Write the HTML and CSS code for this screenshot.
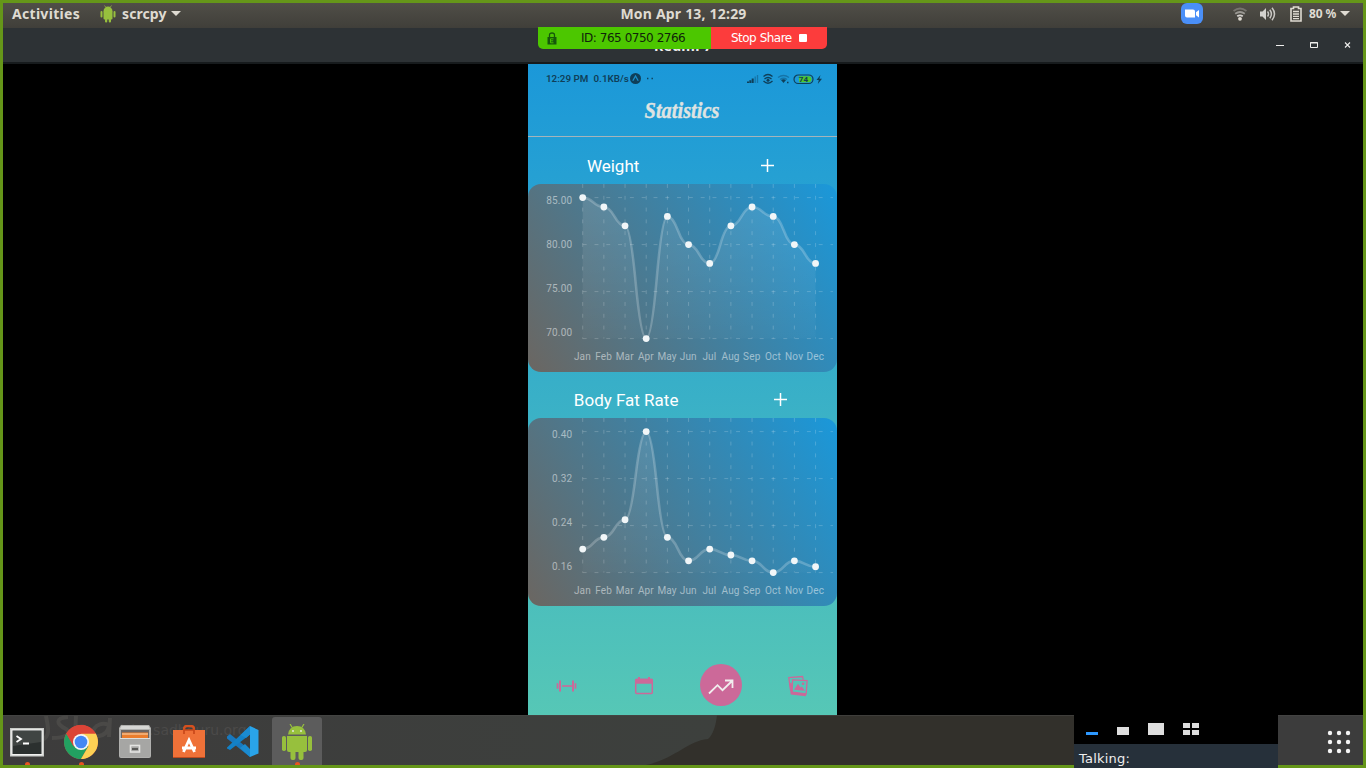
FILE: index.html
```html
<!DOCTYPE html>
<html lang="en">
<head>
<meta charset="utf-8">
<title>Statistics</title>
<link rel="stylesheet" href="styles.css">
</head>
<body>
<div class="screen">
  <header class="topbar">
    <div class="top-left">
      <span class="activities">Activities</span>
      <svg class="droid-small" width="16" height="18" viewBox="0 0 32 36"><g fill="#97c03d"><path d="M7 12h18v15a2 2 0 0 1-2 2H9a2 2 0 0 1-2-2z"/><path d="M7 12.500a9 9.500 0 0 1 18 0z"/><rect x="1" y="12" width="4" height="13" rx="2"/><rect x="27" y="12" width="4" height="13" rx="2"/><rect x="10" y="27" width="4.500" height="8" rx="2"/><rect x="17.500" y="27" width="4.500" height="8" rx="2"/></g><path d="M9 1l3 4M23 1l-3 4" stroke="#97c03d" stroke-width="1.500"/></svg>
      <span class="appname">scrcpy</span>
      <span class="caret"></span>
    </div>
    <div class="clock">Mon Apr 13, 12:29</div>
    <div class="top-right">
      <svg class="zoom-icon" width="22" height="21" viewBox="0 0 22 21"><rect width="22" height="21" rx="6" fill="#4a8ff7"/><path d="M4 6.500h8q2 0 2 2v6H6q-2 0-2-2zM15 9.300L18 7v7.500l-3-2.200z" fill="#fff"/></svg>
      <svg class="wifi-icon" width="14" height="14" viewBox="0 0 14 14" fill="none" stroke-width="1.800"><path d="M.5 4q6.500-5 13 0" stroke="#77756f"/><path d="M2.200 6.800q4.800-3.600 9.600 0" stroke="#9a9893"/><path d="M4.200 9.300q2.800-2 5.600 0" stroke="#d3d1cd"/><circle cx="7" cy="11.800" r="1.900" fill="#dfdbd2"/></svg>
      <svg class="vol-icon" width="16" height="14" viewBox="0 0 16 14"><path d="M0 4.500h2.500L6 1v12L2.500 9.500H0z" fill="#d3d1cd"/><path d="M7.500 4.500q2 2.500 0 5M9.800 2.700q3.200 4.300 0 8.600M12 .8q5 6.200 0 12.400" fill="none" stroke="#c9c7c3" stroke-width="1.500"/></svg>
      <svg class="bat-icon" width="12" height="16" viewBox="0 0 12 16"><path d="M1 2.500h2.500V1h5v1.500H11V15H1z" fill="none" stroke="#dfdbd2" stroke-width="1.600"/><path d="M3 5.500h6M3 8h6M3 10.300h6M3 12.600h6" stroke="#dfdbd2" stroke-width="1.300"/></svg>
      <span class="pct">80 %</span>
      <span class="caret"></span>
    </div>
  </header>

  <div class="titlebar">
    <span class="wintitle">Redmi 7</span>
    <svg class="winbtns" width="80" height="12" viewBox="0 0 80 12" fill="none" stroke="#eeeeec"><path d="M3 6.500h8"/><path d="M37.500 3.500h7v5h-7zM37 4h8" /><path d="M72 3.500l5 5M77 3.500l-5 5" stroke-width="1.100"/></svg>
  </div>

  <main class="stage">
    <section class="phone">
      <div class="status">
        <span class="st-time">12:29 PM</span>
        <span class="st-rate">0.1KB/s</span>
        <svg class="st-app" width="11" height="11" viewBox="0 0 11 11"><circle cx="5.500" cy="5.500" r="5.500" fill="#0f3f59"/><path d="M2.800 7.800L5.500 3l2.700 4.800" fill="none" stroke="#1b8fcb" stroke-width="1.300"/></svg>
        <svg class="st-dots" width="8" height="3" viewBox="0 0 8 3"><path d="M1 1.500h1.400M5.500 1.500h1.400" stroke="#0f3f59" stroke-width="1.400"/></svg>
        <svg class="st-icons" width="78" height="12" viewBox="0 0 78 12" fill="none">
          <path d="M2 10V8.500M4.300 10V7.300M6.700 10V5.500" stroke="#0f3f59" stroke-width="2"/><path d="M9.200 10V3.500M11.500 10V2" stroke="#1574a8" stroke-width="1.300"/>
          <path d="M17.500 3.500q4.500-4 9 0M18.500 6q3.500-3 7 0M17.500 8q4.500 4.500 9 0" stroke="#0f3f59" stroke-width="1.300"/><circle cx="22" cy="7.200" r="1.500" fill="#0f3f59"/>
          <path d="M32 4.500q5.500-4 11 0M34 6.500q3.500-2.500 7 0" stroke="#1574a8" stroke-width="1.300"/><path d="M35 7q2.500-1.400 5 0l-2.500 3z" fill="#0f3f59"/><path d="M41 9.500h1.500" stroke="#0f3f59" stroke-width="1.500"/>
          <rect x="48" y="2" width="19" height="8.500" rx="4.200" stroke="#0f3f59" stroke-width="1.200"/><path d="M53 3.200h9.500a3 3 0 0 1 0 6H53z" fill="#4fc72a"/>
          <text x="52.800" y="9.100" class="st-bat">74</text>
          <path d="M74.500 2L70.500 7h2.300l-1 4 4.200-5.300h-2.600z" fill="#0f3f59"/>
        </svg>
      </div>
      <h1 class="title"><span>Statistics</span></h1>
      <div class="heading"><span>Weight</span><svg width="21" height="21" viewBox="0 0 21 21"><path d="M10.500 4v13M4 10.500h13" stroke="#fff" stroke-width="1.500"/></svg></div>
      <div class="card" id="weight"></div>
      <div class="heading second"><span>Body Fat Rate</span><svg width="21" height="21" viewBox="0 0 21 21"><path d="M10.500 4v13M4 10.500h13" stroke="#fff" stroke-width="1.500"/></svg></div>
      <div class="card" id="fat"></div>
      <nav class="tabs">
        <div class="tab"><svg width="22" height="14" viewBox="0 0 22 14"><path d="M6 7h10" stroke="#cc6999" stroke-width="1.600"/><path d="M4 1.500v11M17 1.500v11" stroke="#cc6999" stroke-width="2"/><path d="M1.500 4.300v5.400M19.500 4.300v5.400" stroke="#cc6999" stroke-width="1.700"/></svg></div>
        <div class="tab"><svg width="20" height="20" viewBox="0 0 20 20"><rect x="1.700" y="3.500" width="16.600" height="14" rx="1" fill="none" stroke="#cc6999" stroke-width="1.500"/><path d="M1 3.700q0-.9 1-.9h2V1h2v1.800h8V1h2v1.800h2q1 0 1 .9v4H1z" fill="#cc6999"/></svg></div>
        <div class="tab"><div class="active"><svg width="26" height="18" viewBox="0 0 26 18"><path d="M1 15.500l8.500-8.300 5 5L23.500 3.500M17 2.500h7.500V10" fill="none" stroke="#f1eeee" stroke-width="1.800"/></svg></div></div>
        <div class="tab"><svg width="22" height="22" viewBox="0 0 22 22" fill="none" stroke="#cc6999"><path d="M5 15.500L3.500 14.800 1.800 2.600 15.500 1.500l.8 3.200" stroke-width="1.300"/><path d="M3.500 8l1.300 10.500L19 20" stroke-width="2.400"/><path d="M5.600 4.800l14.500.9-1 13.300-14-1.800z" stroke-width="1.300"/><path d="M7 14.800l4-6 2.600 3.600 1.300-1 3 4.400z" fill="#cc6999" stroke="none"/><circle cx="16" cy="8.800" r="1.300" fill="#cc6999" stroke="none"/></svg></div>
      </nav>
    </section>
  </main>

  <footer class="dock">
    <svg class="wallpaper" width="1360" height="50" viewBox="0 0 1360 50">
      <defs><linearGradient id="wp" x1="0" x2="1"><stop offset="0" stop-color="#3d3c3c"/><stop offset="1" stop-color="#3d403d"/></linearGradient></defs>
      <rect width="715" height="50" fill="url(#wp)"/>
      <path d="M714 0H1075V50H643C672 44 684 26 705 24C710 20 713 10 714 0z" fill="#32302b"/>
      <path d="M0 .5H1360" stroke="#484846" opacity=".6"/>
      <g fill="none" stroke="#4a4947" stroke-width="4"><path d="M43 1C45 12 48 21 39 25M65 2C52 3 53 9 63 14C70 19 61 23 49 23M73 1L72 22M73 15Q83 5 83 22M107 3L106 22M106 10C92 4 84 22 96 21Q104 20 106 11"/></g>
      <text x="117" y="20" class="wm">isha.sadhguru.org</text>
    </svg>
    <div class="apps">
      <div class="app run"><svg width="34" height="34" viewBox="0 0 34 34"><rect width="34" height="28.500" y="3" fill="#c8cac7"/><rect x="1.300" y="4.300" width="31.400" height="26" fill="#f1f1f0"/><rect x="2.500" y="5.500" width="29" height="23.500" fill="#2b302f"/><path d="M3 6h28v11L3 21z" fill="#404543"/><path d="M6.500 11l4.500 3-4.500 3M13 18.500h6" fill="none" stroke="#fff" stroke-width="1.800"/></svg></div>
      <div class="app run"><svg width="34" height="34" viewBox="0 0 34 34"><circle cx="17" cy="17" r="17" fill="#e0493a"/><path d="M2.300 8.500A17 17 0 0 0 17 34L24.400 21.300 9.600 21.300z" fill="#22a161"/><path d="M17 34A17 17 0 0 0 31.700 8.500H17L24.400 21.300z" fill="#fcd054"/><path d="M2.300 8.500A17 17 0 0 1 31.700 8.500H17L9.600 21.300z" fill="#db4437"/><circle cx="17" cy="17" r="8" fill="#f4f4f4"/><circle cx="17" cy="17" r="6.300" fill="#4387f4"/></svg></div>
      <div class="app"><svg width="34" height="34" viewBox="0 0 34 34"><path d="M3 0h28l2 3v28q0 2-2 2H3q-2 0-2-2V3z" fill="#b0b0ae"/><path d="M3.500 1h27l1.500 3H2z" fill="#d6d6d4"/><rect x="3" y="5" width="28" height="10" fill="#6b6664"/><path d="M4 7.500h26V14H4z" fill="#eb7d2c"/><path d="M4 9h26" stroke="#f7d9b5"/><path d="M2 13h30v18q0 1-1 1H3q-1 0-1-1z" fill="#a6a6a4"/><path d="M2 13.500h30" stroke="#dededc"/><rect x="12.500" y="20.500" width="9" height="6.500" fill="none" stroke="#e4e4e2" stroke-width="1.600"/><path d="M14 24h6" stroke="#595957" stroke-width="2"/></svg></div>
      <div class="app"><svg width="34" height="34" viewBox="0 0 34 34"><path d="M12 9V4q0-3 3-3h4q3 0 3 3v5" fill="none" stroke="#d5501e" stroke-width="2.300"/><path d="M1 5h32v28H1z" fill="#ef7138"/><path d="M1 32.500h32" stroke="#bd4a1f"/><path d="M12 9V5h10v4" fill="none" stroke="#c9481a" stroke-width="1.700"/><path d="M11.500 27l5.500-12 5.500 12M10 23h14" fill="none" stroke="#fff" stroke-width="2.800"/></svg></div>
      <div class="app"><svg width="34" height="34" viewBox="0 0 34 34"><path d="M1 11.500L4 9l20 16v7L1 13.500z" fill="#1978bd"/><path d="M1 22.500L24 1v8.500L4 25l-3-1.500z" fill="#1381c7"/><path d="M24 1l8.500 4v23.500L24 32z" fill="#29a4ea"/><path d="M24 1L14.500 10 20 13l4-3.500zM24 32L14 23l5-4 5 5z" fill="#1b8bd0"/></svg></div>
      <div class="app run current"><svg width="34" height="36" viewBox="0 0 34 36"><g fill="#97c03d"><path d="M7 12h20v14a2 2 0 0 1-2 2H9a2 2 0 0 1-2-2z"/><path d="M8 10.500a9 8.500 0 0 1 18 0z"/><rect x="2" y="12" width="4" height="15" rx="1.800"/><rect x="28" y="12" width="4" height="15" rx="1.800"/><rect x="10.500" y="26" width="5" height="10" rx="2"/><rect x="18.500" y="26" width="5" height="10" rx="2"/></g><path d="M10 0l2.500 4M24 0l-2.500 4" stroke="#97c03d" stroke-width="1.200"/><circle cx="13" cy="7" r=".9" fill="#eee"/><circle cx="21" cy="7" r=".9" fill="#eee"/></svg></div>
    </div>
    <svg class="grid" width="24" height="24" viewBox="0 0 24 24" fill="#f5f5f5"><circle cx="3" cy="3" r="2.200"/><circle cx="12" cy="3" r="2.200"/><circle cx="21" cy="3" r="2.200"/><circle cx="3" cy="12" r="2.200"/><circle cx="12" cy="12" r="2.200"/><circle cx="21" cy="12" r="2.200"/><circle cx="3" cy="21" r="2.200"/><circle cx="12" cy="21" r="2.200"/><circle cx="21" cy="21" r="2.200"/></svg>
  </footer>
</div>

<div class="share">
  <div class="share-id"><svg width="10" height="13" viewBox="0 0 10 13"><path d="M2.500 6V3q0-2 2.500-2t2.500 2v3" fill="none" stroke="#15580a" stroke-width="1.300"/><rect x=".5" y="5" width="9" height="7.500" fill="#15580a"/><path d="M6.500 6.800h-3v4h3M3.500 8.800h2.700" fill="none" stroke="#4cc700" stroke-width=".9"/></svg><span>ID: 765 0750 2766</span></div>
  <div class="share-stop"><span>Stop Share</span><i></i></div>
</div>

<div class="talking">
  <div class="talk-head"><svg width="204" height="29" viewBox="0 0 204 29"><rect x="12" y="17" width="12" height="3" fill="#2d98ff"/><g fill="#dedede"><rect x="43" y="12" width="12" height="8"/><rect x="74" y="8" width="16" height="12"/><rect x="109" y="8" width="7" height="5"/><rect x="118" y="8" width="7" height="5"/><rect x="109" y="15" width="7" height="5"/><rect x="118" y="15" width="7" height="5"/></g></svg></div>
  <div class="talk-body">Talking:</div>
</div>
<script src="charts.js"></script>
</body>
</html>
```
FILE: styles.css
```css
* { box-sizing: border-box; }
body { margin: 0; width: 1366px; height: 768px; overflow: hidden; position: relative; background: #000; }
svg { display: block; flex: none; }
.screen { width: 1366px; height: 768px; border: 3px solid #659619; display: flex; flex-direction: column; }

.topbar { height: 25px; flex: none; display: grid; grid-template-columns: 1fr auto 1fr; align-items: center; padding-bottom: 4px; background: linear-gradient(#504e47, #403f3a); color: #dfdbd2; font: bold 14px/20px "Noto Sans", sans-serif; }
.top-left { display: flex; align-items: center; padding-left: 9px; }
.activities { width: 68px; white-space: nowrap; letter-spacing: 0.3px; }
.droid-small { margin: 0 6px 0 20px; }
.appname { width: 45px; letter-spacing: 0.1px; }
.caret { width: 0; height: 0; border: 5px solid transparent; border-top-color: #dfdbd2; border-bottom: 0; margin-left: 4px; }
.clock { letter-spacing: 0.2px; white-space: nowrap; padding-left: 1px; }
.top-right { display: flex; align-items: center; justify-content: flex-end; padding-right: 13px; }
.zoom-icon { margin-right: 30px; }
.wifi-icon { margin-right: 13px; }
.vol-icon { margin-right: 14px; }
.bat-icon { margin-right: 7px; }
.pct { width: 27px; font-size: 12px; letter-spacing: -0.1px; white-space: nowrap; }

.titlebar { height: 36px; flex: none; background: #2d3235; border-bottom: 2px solid #171b1d; display: grid; grid-template-columns: 1fr auto 1fr; align-items: center; color: #eeeeec; font: bold 14px/20px "Noto Sans", sans-serif; }
.wintitle { grid-column: 2; padding-top: 2px; letter-spacing: 0.3px; }
.winbtns { justify-self: end; margin-right: 10px; }

.stage { flex: 1; min-height: 0; background: #000; display: flex; justify-content: center; }
.phone { width: 309px; margin-right: 1px; height: 651px; background: linear-gradient(#1b98d9, #56c7b6); display: flex; flex-direction: column; font-family: Roboto, sans-serif; }
.status { height: 30px; flex: none; display: flex; align-items: center; padding: 0 13px 1px 18px; color: #0f3f59; font-size: 9.800px; font-weight: 600; white-space: nowrap; }
.st-time { width: 47.500px; }
.st-rate { width: 36.500px; }
.st-dots { margin-left: 5px; }
.st-icons { margin-left: auto; }
.st-bat { font: bold 8px Roboto, sans-serif; fill: #0f3f59; }
.title { margin: 0; height: 43px; flex: none; border-bottom: 1px solid #a5b4bb; display: flex; justify-content: center; color: #dfe3e2; font: italic bold 24px/32px "Liberation Serif", serif; }
.title span { transform: scaleX(.85); transform-origin: center; -webkit-text-stroke: 0.400px #dfe3e2; }
.heading { height: 47px; flex: none; display: flex; justify-content: space-around; align-items: center; padding-top: 11px; color: #fff; font-size: 17px; line-height: 20px; white-space: nowrap; }
.heading svg { margin-bottom: 1px; }
.second { height: 46px; padding-top: 10px; }
.card { height: 188px; flex: none; border-radius: 13px; overflow: hidden; }
.axis { font: 10px Roboto, sans-serif; letter-spacing: 0.15px; fill: #fff; fill-opacity: .5; }
.tabs { margin-top: 58px; height: 42px; display: grid; grid-template-columns: repeat(4, 1fr); align-items: center; justify-items: center; }
.tab { display: grid; place-items: center; padding-top: 2px; }
.tab:has(.active) { padding-top: 0; }
.active { width: 42px; height: 42px; border-radius: 50%; background: #cc6999; display: grid; place-items: center; padding-top: 3px; }

.dock { height: 50px; flex: none; display: flex; align-items: center; justify-content: space-between; position: relative; background: #3c3c3c; }
.wallpaper { position: absolute; left: 0; top: 0; }
.wm { font: 14px "DejaVu Sans", sans-serif; fill: #4b4a49; }
.apps { display: flex; position: relative; gap: 4px; margin-left: -1px; }
.app { width: 50px; height: 50px; display: grid; place-items: center; padding-top: 4px; position: relative; overflow: hidden; }
.run::after { content: ""; position: absolute; left: 23px; bottom: -2px; width: 5px; height: 5px; border-radius: 50%; background: #e95420; }
.current { background: #5c5c5c; border-radius: 3px 3px 0 0; height: 48px; margin-top: 2px; padding-top: 2px; }
.grid { position: relative; margin: 4px 12px 0 0; }

.share { position: absolute; left: 538px; top: 27px; width: 289px; height: 22px; display: flex; border-radius: 0 0 5px 5px; overflow: hidden; font: 12px/22px "DejaVu Sans", sans-serif; white-space: nowrap; }
.share-id { width: 173px; background: #4cc700; color: #10240a; display: flex; align-items: center; padding-left: 9px; gap: 24px; letter-spacing: -0.55px; }
.share-stop { flex: 1; background: #fc3c3c; color: #fff; display: flex; align-items: center; padding-left: 20px; gap: 7px; letter-spacing: -0.55px; }
.share-id, .share-stop { word-spacing: 0.4px; }
.share-stop i { width: 8px; height: 8px; border-radius: 1px; background: #fff; }

.talking { position: absolute; left: 1074px; top: 715px; width: 204px; height: 53px; display: flex; flex-direction: column; }
.talk-head { height: 29px; background: #000; }
.talk-head svg { margin-top: 0; }
.talk-body { height: 24px; background: #26303a; color: #eee; padding-left: 5px; font: 13px/29px "DejaVu Sans", sans-serif; letter-spacing: 0.2px; overflow: hidden; }
```
FILE: charts.js
```js
const MONTHS = ["Jan", "Feb", "Mar", "Apr", "May", "Jun", "Jul", "Aug", "Sep", "Oct", "Nov", "Dec"];
const X0 = 54.7, STEP = 21.17, TOP = 13.6, BOTTOM = 154.6;

function drawChart(id, values, max, min, labels) {
  const px = i => X0 + i * STEP;
  const py = v => TOP + (max - v) / (max - min) * (BOTTOM - TOP);
  let line = `M${px(0)},${py(values[0])}`;
  for (let i = 0; i < values.length - 1; i++) {
    const ya = py(values[i]), yb = py(values[i + 1]);
    const xm = (px(i) + px(i + 1)) / 2, ym = (ya + yb) / 2;
    line += ` Q${(xm + px(i)) / 2},${ya} ${xm},${ym} Q${(xm + px(i + 1)) / 2},${yb} ${px(i + 1)},${yb}`;
  }
  let grid = "";
  for (let i = 0; i < 12; i++) grid += `<path d="M${px(i)},0V${BOTTOM}"/>`;
  for (let i = 0; i < 4; i++) grid += `<path d="M${X0},${TOP + i * 47}H305"/>`;
  const dots = values.map((v, i) => `<circle cx="${px(i)}" cy="${py(v)}" r="3.4"/>`).join("");
  const months = MONTHS.map((m, i) => `<text class="axis" text-anchor="middle" x="${px(i) - 0.3}" y="175.5">${m}</text>`).join("");
  const ticks = labels.map((t, i) => `<text class="axis" text-anchor="end" x="44.2" y="${20.4 + i * 43.7}">${t}</text>`).join("");
  document.getElementById(id).innerHTML =
    `<svg width="309" height="188" viewBox="0 0 309 188"><defs>
      <linearGradient id="bg-${id}" gradientUnits="userSpaceOnUse" x1="0" y1="188" x2="309" y2="0"><stop offset="0" stop-color="#6b6661"/><stop offset="1" stop-color="#1a98da"/></linearGradient>
      <linearGradient id="fill-${id}" x1="0" y1="0" x2="0" y2="1"><stop offset="0" stop-color="#fff" stop-opacity=".11"/><stop offset="1" stop-color="#fff" stop-opacity=".02"/></linearGradient></defs>
      <rect width="309" height="188" fill="url(#bg-${id})"/>
      <g stroke="#fff" stroke-opacity=".22" stroke-dasharray="3.93 7.87" stroke-width=".9">${grid}</g>
      <path d="${line}V${BOTTOM}H${X0}z" fill="url(#fill-${id})"/>
      <path d="${line}" fill="none" stroke="#fff" stroke-opacity=".22" stroke-width="2.6"/>
      <g fill="#f1f6f8">${dots}</g>${months}${ticks}</svg>`;
}

drawChart("weight", [85, 84, 82, 70, 83, 80, 78, 82, 84, 83, 80, 78], 85, 70, ["85.00", "80.00", "75.00", "70.00"]);
drawChart("fat", [0.2, 0.22, 0.25, 0.4, 0.22, 0.18, 0.2, 0.19, 0.18, 0.16, 0.18, 0.17], 0.4, 0.16, ["0.40", "0.32", "0.24", "0.16"]);
```
